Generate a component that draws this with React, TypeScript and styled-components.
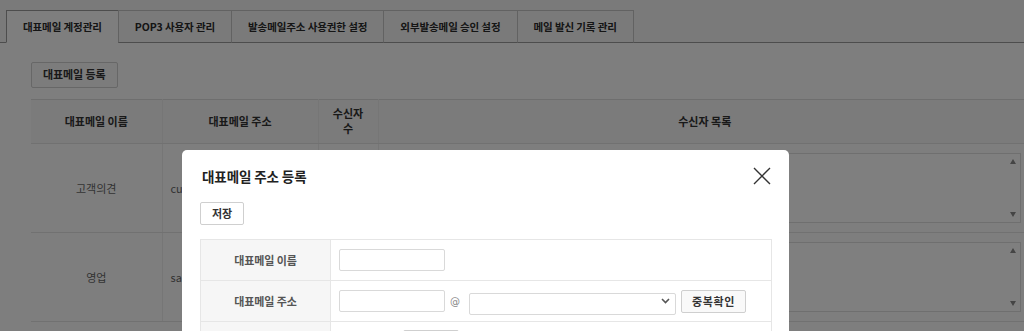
import React from "react";
import styled, { createGlobalStyle } from "styled-components";

const GlobalStyle = createGlobalStyle`
  html, body {
    margin: 0;
    padding: 0;
    width: 1024px;
    height: 331px;
    overflow: hidden;
    background: #ffffff;
    font-family: "Noto Sans CJK KR", "Noto Sans", sans-serif;
  }
  * { box-sizing: border-box; }
`;

const Page = styled.div`
  position: relative;
  width: 1024px;
  height: 331px;
  overflow: hidden;
  background: #fdfdfd;
`;

const TabBar = styled.div`
  display: flex;
  padding: 10px 0 0 6px;
  background: #f5f5f5;
  border-bottom: 1px solid #9a9a9a;
`;

const Tab = styled.div<{ $active?: boolean }>`
  height: 33px;
  padding: 0 16px;
  margin-bottom: -1px;
  margin-left: ${(p) => (p.$active ? "0" : "-1px")};
  display: flex;
  align-items: center;
  font-size: 10.5px;
  font-weight: 700;
  color: #2a2a2a;
  letter-spacing: -0.1px;
  background: ${(p) => (p.$active ? "#fdfdfd" : "#f5f5f5")};
  border: 1px solid ${(p) => (p.$active ? "#9a9a9a" : "#c4c4c4")};
  border-bottom: 1px solid ${(p) => (p.$active ? "#fdfdfd" : "#9a9a9a")};
`;

const Content = styled.div`
  padding: 17px 0 0 31px;
`;

const PlainButton = styled.button<{ $h?: number }>`
  height: ${(p) => p.$h ?? 23}px;
  padding: 0 11px;
  border: 1px solid #cfcfcf;
  border-radius: 2px;
  background: #f8f8f8;
  font-family: inherit;
  font-size: 11px;
  font-weight: 700;
  color: #333;
  letter-spacing: -0.1px;
  line-height: 1;
  cursor: pointer;
`;

const WhiteButton = styled(PlainButton)`
  background: #ffffff;
  padding: 0 11px;
`;

const ListTable = styled.table`
  margin-top: 11px;
  width: 1000px;
  border-collapse: collapse;
  table-layout: fixed;
  border-top: 1px solid #dcdcdc;
`;

const HeadCell = styled.th<{ $w?: number }>`
  width: ${(p) => (p.$w ? `${p.$w}px` : "auto")};
  height: 44px;
  background: #f6f6f6;
  border-bottom: 1px solid #e2e2e2;
  border-left: 1px solid #ececec;
  &:first-child { border-left: none; }
  font-size: 11px;
  font-weight: 700;
  color: #333;
  line-height: 15px;
  text-align: center;
  padding: 0 4px;
`;

const BodyCell = styled.td<{ $align?: string }>`
  height: 89px;
  border-bottom: 1px solid #e2e2e2;
  border-left: 1px solid #ececec;
  &:first-child { border-left: none; }
  font-size: 11px;
  color: #666;
  text-align: ${(p) => p.$align ?? "center"};
  padding: 0 8px;
  white-space: nowrap;
  overflow: hidden;
`;

const ListCell = styled.td`
  height: 89px;
  border-bottom: 1px solid #e2e2e2;
  border-left: 1px solid #ececec;
  padding: 0 10px;
`;

const RecipientBox = styled.div`
  position: relative;
  height: 70px;
  border: 1px solid #dedede;
  background: #fff;
`;

const ScrollTrack = styled.div`
  position: absolute;
  right: 2px;
  top: 2px;
  bottom: 2px;
  width: 10px;
  display: flex;
  flex-direction: column;
  justify-content: space-between;
  align-items: center;
  padding: 3px 0;
`;

const Arrow = styled.span<{ $down?: boolean }>`
  width: 0;
  height: 0;
  border-left: 3.5px solid transparent;
  border-right: 3.5px solid transparent;
  ${(p) =>
    p.$down
      ? "border-top: 5px solid #8a8a8a;"
      : "border-bottom: 5px solid #8a8a8a;"}
`;

const Overlay = styled.div`
  position: absolute;
  inset: 0;
  z-index: 10;
  background: rgba(0, 0, 0, 0.5);
`;

const Modal = styled.div`
  position: absolute;
  z-index: 11;
  left: 182px;
  top: 150px;
  width: 607px;
  height: 240px;
  background: #ffffff;
  border-radius: 5px;
  padding: 16px 18px 0 18px;
`;

const ModalHeader = styled.div`
  display: flex;
  justify-content: space-between;
  align-items: center;
  height: 20px;
  padding-left: 2px;
`;

const ModalTitle = styled.h2`
  margin: 0;
  font-size: 13.5px;
  font-weight: 700;
  color: #222;
  line-height: 20px;
  letter-spacing: -0.1px;
`;

const CloseButton = styled.button`
  width: 18px;
  height: 18px;
  padding: 0;
  border: none;
  background: transparent;
  display: flex;
  cursor: pointer;
`;

const ModalToolbar = styled.div`
  display: flex;
  margin-top: 16px;
`;

const FormTable = styled.div`
  margin-top: 14px;
  width: 572px;
  border-top: 1px solid #e6e6e6;
  border-left: 1px solid #e6e6e6;
  border-right: 1px solid #e6e6e6;
`;

const FormRow = styled.div`
  display: grid;
  grid-template-columns: 130px 1fr;
  height: 41px;
  border-bottom: 1px solid #e6e6e6;
`;

const FormLabel = styled.div`
  background: #f6f6f6;
  border-right: 1px solid #e6e6e6;
  display: flex;
  align-items: center;
  justify-content: center;
  font-size: 11px;
  font-weight: 700;
  color: #555;
  letter-spacing: -0.1px;
`;

const FormField = styled.div`
  display: flex;
  align-items: center;
  padding-left: 8px;
`;

const TextInput = styled.input<{ $w?: number }>`
  width: ${(p) => p.$w ?? 106}px;
  height: 22px;
  border: 1px solid #d9d9d9;
  border-radius: 2px;
  background: #fff;
  padding: 0 6px;
  font-family: inherit;
  font-size: 11px;
  outline: none;
`;

const AtSign = styled.span`
  margin: 0 9px 0 5px;
  font-family: "DejaVu Sans", sans-serif;
  font-size: 10px;
  color: #888;
`;

const SelectWrap = styled.div`
  position: relative;
  width: 207px;
  height: 22px;
`;

const DomainSelect = styled.select`
  appearance: none;
  width: 100%;
  height: 100%;
  border: 1px solid #d9d9d9;
  border-radius: 2px;
  background: #fff;
  font-family: inherit;
  font-size: 11px;
  padding: 0 20px 0 6px;
  outline: none;
`;

const Chevron = styled.svg`
  position: absolute;
  right: 6px;
  top: 8px;
  pointer-events: none;
`;

const CheckButton = styled(WhiteButton)`
  margin-left: 5px;
  padding: 0 10px;
  background: #f9f9f9;
  letter-spacing: 0.6px;
`;

const CountText = styled.span`
  font-size: 11px;
  color: #555;
  width: 64px;
  align-self: flex-start;
  margin-top: 12px;
`;

const AddButton = styled(PlainButton)`
  margin-top: 8px;
  align-self: flex-start;
  width: 56px;
  background: #eeeeee;
`;

const tabs = [
  "대표메일 계정관리",
  "POP3 사용자 관리",
  "발송메일주소 사용권한 설정",
  "외부발송메일 승인 설정",
  "메일 발신 기록 관리",
];

const rows = [
  { name: "고객의견", address: "customer@company.co.kr", count: "0" },
  { name: "영업", address: "sales@company.co.kr", count: "0" },
];

export default function App() {
  return (
    <>
      <GlobalStyle />
      <Page>
        <TabBar>
          {tabs.map((t, i) => (
            <Tab key={t} $active={i === 0}>
              {t}
            </Tab>
          ))}
        </TabBar>
        <Content>
          <PlainButton $h={26}>대표메일 등록</PlainButton>
          <ListTable>
            <thead>
              <tr>
                <HeadCell $w={131}>대표메일 이름</HeadCell>
                <HeadCell $w={156}>대표메일 주소</HeadCell>
                <HeadCell $w={60}>
                  수신자
                  <br />수
                </HeadCell>
                <HeadCell>수신자 목록</HeadCell>
              </tr>
            </thead>
            <tbody>
              {rows.map((r) => (
                <tr key={r.name}>
                  <BodyCell>{r.name}</BodyCell>
                  <BodyCell $align="left">{r.address}</BodyCell>
                  <BodyCell>{r.count}</BodyCell>
                  <ListCell>
                    <RecipientBox>
                      <ScrollTrack>
                        <Arrow />
                        <Arrow $down />
                      </ScrollTrack>
                    </RecipientBox>
                  </ListCell>
                </tr>
              ))}
            </tbody>
          </ListTable>
        </Content>
        <Overlay />
        <Modal>
          <ModalHeader>
            <ModalTitle>대표메일 주소 등록</ModalTitle>
            <CloseButton aria-label="닫기">
              <svg width="18" height="18" viewBox="0 0 18 18">
                <path
                  d="M1 1 L17 17 M17 1 L1 17"
                  stroke="#333"
                  strokeWidth="1.4"
                  fill="none"
                />
              </svg>
            </CloseButton>
          </ModalHeader>
          <ModalToolbar>
            <WhiteButton>저장</WhiteButton>
          </ModalToolbar>
          <FormTable>
            <FormRow>
              <FormLabel>대표메일 이름</FormLabel>
              <FormField>
                <TextInput />
              </FormField>
            </FormRow>
            <FormRow>
              <FormLabel>대표메일 주소</FormLabel>
              <FormField>
                <TextInput />
                <AtSign>@</AtSign>
                <SelectWrap>
                  <DomainSelect defaultValue="">
                    <option value=""></option>
                  </DomainSelect>
                  <Chevron width="9" height="6" viewBox="0 0 9 6">
                    <path
                      d="M1 1 L4.5 4.5 L8 1"
                      stroke="#555"
                      strokeWidth="1.6"
                      fill="none"
                    />
                  </Chevron>
                </SelectWrap>
                <CheckButton>중복확인</CheckButton>
              </FormField>
            </FormRow>
            <FormRow>
              <FormLabel>수신자</FormLabel>
              <FormField>
                <CountText>0 명</CountText>
                <AddButton>추가</AddButton>
              </FormField>
            </FormRow>
          </FormTable>
        </Modal>
      </Page>
    </>
  );
}
